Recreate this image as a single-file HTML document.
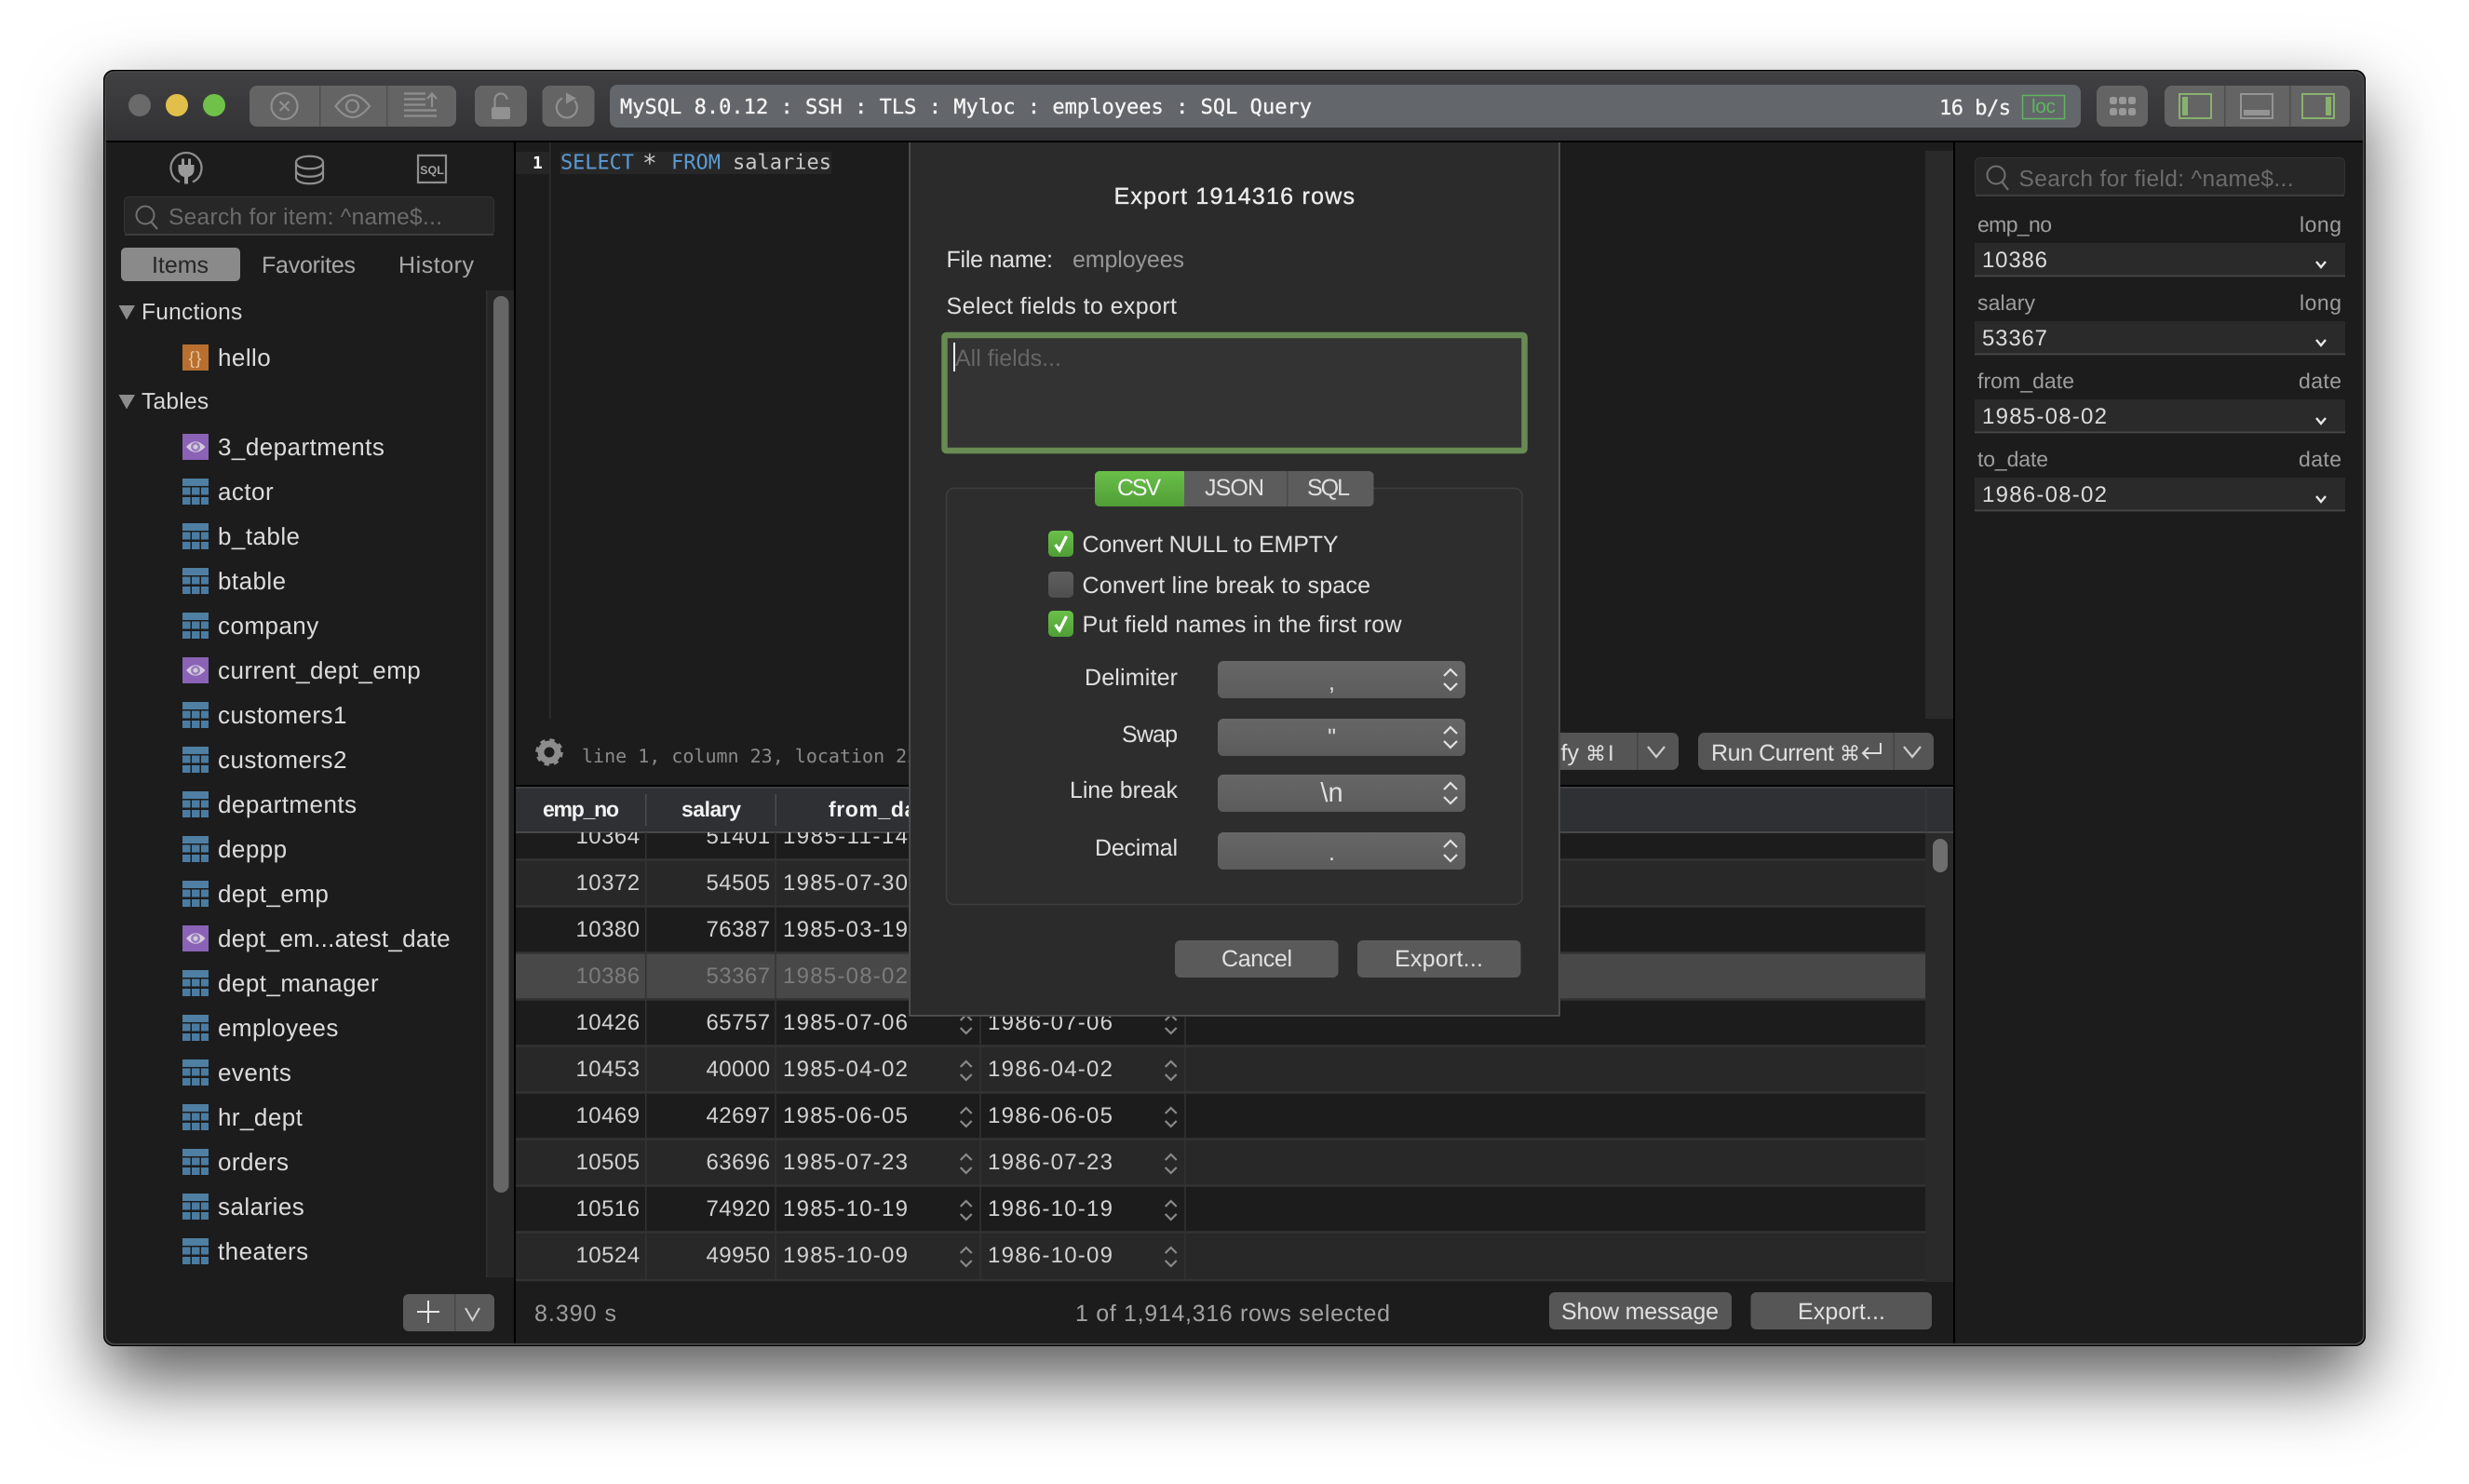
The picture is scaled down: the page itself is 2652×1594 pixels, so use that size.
<!DOCTYPE html>
<html><head><meta charset="utf-8"><title>Export</title>
<style>
html,body{margin:0;padding:0;background:#fff;width:2652px;height:1594px;overflow:hidden}
#sh{position:absolute;left:111px;top:75px;width:2430px;height:1371px;border-radius:11px;box-shadow:0 36px 80px rgba(0,0,0,.66)}
svg{position:absolute;left:0;top:0}
text{font-family:"Liberation Sans",sans-serif;text-rendering:geometricPrecision;white-space:pre}
.m{font-family:"DejaVu Sans Mono","Liberation Mono",monospace}
.t{font-size:26px;letter-spacing:.45px;fill:#dcdcdc}
.s{font-size:24.5px;letter-spacing:.25px;fill:#d8d8d8}
.c{font-size:24px;letter-spacing:.45px;fill:#d2d2d2;text-anchor:end}
.d{font-size:24px;fill:#d2d2d2}
.l{font-size:23px;fill:#9e9e9e}
.v{font-size:24px;fill:#dcdcdc}
.b{font-size:25px;fill:#e6e6e6}
.w{font-size:25px;fill:#e0e0e0}
.h{font-size:23px;fill:#f2f2f2;font-weight:bold}
.ic{fill:none;stroke:#8f8f8f;stroke-width:2.2}
</style></head><body>
<div id="sh"></div>
<svg width="2652" height="1594" viewBox="0 0 2652 1594" xmlns="http://www.w3.org/2000/svg">
<defs>
<linearGradient id="tb" x1="0" y1="0" x2="0" y2="1"><stop offset="0" stop-color="#414143"/><stop offset="1" stop-color="#323234"/></linearGradient>
<linearGradient id="gr" x1="0" y1="0" x2="0" y2="1"><stop offset="0" stop-color="#6ac048"/><stop offset="1" stop-color="#4f9e37"/></linearGradient>
<linearGradient id="gy" x1="0" y1="0" x2="0" y2="1"><stop offset="0" stop-color="#5f5f5f"/><stop offset="1" stop-color="#4e4e4e"/></linearGradient>
<linearGradient id="btn" x1="0" y1="0" x2="0" y2="1"><stop offset="0" stop-color="#666"/><stop offset="1" stop-color="#5c5c5c"/></linearGradient>
<clipPath id="win"><rect x="111" y="75" width="2430" height="1371" rx="11"/></clipPath>
<clipPath id="rows"><rect x="553" y="894" width="1515" height="484"/></clipPath>
<g id="ti"><rect x="196" y="0" width="28" height="8" fill="#4f7fa2"/><path d="M196 9.500h8.500v8h-8.500zM206 9.500h8.500v8h-8.500zM216 9.500h8v8h-8zM196 20h8.500v8h-8.500zM206 20h8.500v8h-8.500zM216 20h8v8h-8z" fill="#4a7ca2"/></g>
<g id="vi"><rect x="196" y="0" width="28" height="28" fill="#8a62b6"/><path d="M200 14Q210 2.500 220.500 14Q210 25.500 200 14Z" fill="#d4cadf"/><circle cx="210" cy="14" r="5" fill="#9a7cbd"/><circle cx="210" cy="14" r="2.500" fill="#d4cadf"/></g>
<g id="st"><path d="M-6 -4 0 -10 6 -4M-6 4 0 10 6 4" fill="none" stroke="#8a8a8a" stroke-width="2.2"/></g>
<g id="pst"><path d="M-7 -4 0 -11 7 -4M-7 4 0 11 7 4" fill="none" stroke="#e2e2e2" stroke-width="2.2"/></g>
<g id="dn"><path d="M-5 -3 0 3 5 -3" fill="none" stroke="#e8e8e8" stroke-width="2.4"/></g>
<g id="ck"><path d="M-6 1 -1.5 7 6 -8" fill="none" stroke="#fff" stroke-width="3.2"/></g>
</defs>

<g clip-path="url(#win)">
<rect x="111" y="75" width="2430" height="1371" fill="#1c1c1c"/>
<rect x="111" y="75" width="2430" height="76" fill="url(#tb)"/>
<rect x="111" y="151" width="2430" height="2" fill="#000"/>

<!-- traffic -->
<circle cx="150" cy="113" r="12" fill="#6a6a6a"/><circle cx="190" cy="113" r="12" fill="#e2bf4b"/><circle cx="230" cy="113" r="12" fill="#6fc149"/>

<!-- toolbar -->
<rect x="268" y="92" width="222" height="44" rx="8" fill="#646464"/>
<rect x="343" y="92" width="1.500" height="44" fill="#505050"/><rect x="415" y="92" width="1.500" height="44" fill="#505050"/>
<circle cx="305.500" cy="114" r="14" class="ic"/><path d="M300.500 109l10 10M310.500 109l-10 10" class="ic"/>
<path d="M360.500 114Q378.500 90 397 114Q378.500 138 360.500 114Z" class="ic"/><circle cx="378.500" cy="114" r="6.500" class="ic"/>
<path d="M434 100.500H457M434 106.500H457M434 112.500H457M434 118.500H469M434 124.500H469M464 115V101M459 106L464 100.500 469 106" class="ic"/>
<rect x="510" y="92" width="56" height="44" rx="8" fill="#646464"/>
<path d="M531.500 116V107a6.500 6.500 0 0 1 13 0" class="ic"/><rect x="528" y="115" width="20" height="13" rx="2" fill="#919191"/>
<rect x="582.500" y="92" width="56" height="44" rx="8" fill="#646464"/>
<path d="M604 105.500A11 11 0 1 0 617 108" class="ic"/><path d="M608 99.500 619 105.500 608 111.500Z" fill="#8f8f8f"/>

<rect x="655" y="91" width="1580" height="46" rx="8" fill="#63666b"/>
<text x="666" y="122" class="m" font-size="22" fill="#f4f4f4" stroke="#f4f4f4" stroke-width=".35" textLength="743">MySQL 8.0.12 : SSH : TLS : Myloc : employees : SQL Query</text>
<text x="2083" y="123" class="m" font-size="22" fill="#f4f4f4" stroke="#f4f4f4" stroke-width=".35" textLength="77">16 b/s</text>
<rect x="2172.500" y="102.500" width="45" height="25" fill="none" stroke="#5fb65f" stroke-width="1.500"/>
<text x="2182" y="121" font-size="21" fill="#5fb65f" textLength="26">loc</text>
<rect x="2252" y="92" width="55" height="44" rx="8" fill="#646464"/>
<g fill="#999"><rect x="2266" y="104" width="8" height="8" rx="2.500"/><rect x="2276" y="104" width="8" height="8" rx="2.500"/><rect x="2286" y="104" width="8" height="8" rx="2.500"/><rect x="2266" y="116" width="8" height="8" rx="2.500"/><rect x="2276" y="116" width="8" height="8" rx="2.500"/><rect x="2286" y="116" width="8" height="8" rx="2.500"/></g>
<rect x="2325" y="92" width="199" height="44" rx="8" fill="#646464"/>
<rect x="2389" y="92" width="1.500" height="44" fill="#4e4e4e"/><rect x="2459" y="92" width="1.500" height="44" fill="#4e4e4e"/>
<rect x="2341" y="101" width="34" height="26" fill="none" stroke="#88b16f" stroke-width="2"/><rect x="2344" y="104" width="6" height="20" fill="#88b16f"/>
<rect x="2407" y="101" width="34" height="26" fill="none" stroke="#949494" stroke-width="2"/><rect x="2410" y="118" width="28" height="6" fill="#949494"/>
<rect x="2473" y="101" width="34" height="26" fill="none" stroke="#88b16f" stroke-width="2"/><rect x="2498" y="104" width="6" height="20" fill="#88b16f"/>

<!-- sidebar top icons -->
<path d="M193 195.500A16.500 16.500 0 1 1 207 195.500" class="ic" stroke="#999"/>
<path d="M195 170.500v7h3v-7zM202 170.500v7h3v-7z" fill="#9a9a9a"/><path d="M191.500 177h17v5c0 5-3.500 7.500-6.500 8v7.500h-4V190c-3-.5-6.500-3-6.500-8z" fill="#9a9a9a"/>
<path d="M318 174.500c0-9 29-9 29 0s-29 9-29 0v16c0 9 29 9 29 0v-16M318 183c0 9 29 9 29 0" class="ic"/>
<rect x="449" y="167" width="30" height="29" class="ic"/>
<text x="464" y="187" font-size="12.500" font-weight="bold" fill="#a0a0a0" text-anchor="middle">SQL</text>

<!-- left search -->
<rect x="133.500" y="211.500" width="397" height="41" rx="5" fill="#272727" stroke="#333"/>
<rect x="134" y="251" width="396" height="2" fill="#3d3d3d"/>
<circle cx="156" cy="231" r="9.500" fill="none" stroke="#707070" stroke-width="2"/><path d="M162.500 238.500 169 246" stroke="#707070" stroke-width="2.200"/>
<text x="181" y="241" font-size="24.500" fill="#6c6c6c" textLength="294">Search for item: ^name$...</text>

<!-- tabs -->
<rect x="130" y="266" width="128" height="36" rx="5" fill="#8a8a8a"/>
<text x="163" y="293" class="b" style="fill:#262626" textLength="61">Items</text>
<text x="281" y="293" class="b" style="fill:#a8a8a8" textLength="101">Favorites</text>
<text x="428" y="293" class="b" style="fill:#a8a8a8" textLength="81">History</text>

<!-- tree -->
<rect x="522" y="312" width="30" height="1060" fill="#262626"/><rect x="522" y="312" width="1.500" height="1060" fill="#303030"/>
<rect x="530" y="318" width="16.500" height="963" rx="8" fill="#666"/>
<path d="M127.500 328H145L136 343.500Z" fill="#8c8c8c"/><path d="M127.500 424H145L136 439.500Z" fill="#8c8c8c"/>
<text x="152" y="343" class="s">Functions</text>
<text x="152" y="439" class="s">Tables</text>
<rect x="196" y="370" width="28" height="28" fill="#b86f2f"/><text x="210" y="391" font-size="19" fill="#e9c49d" text-anchor="middle" letter-spacing="1">{}</text>
<text x="234" y="393" class="t">hello</text>

<use href="#vi" y="466"/><text x="234" y="489" class="t">3_departments</text>
<use href="#ti" y="514"/><text x="234" y="537" class="t">actor</text>
<use href="#ti" y="562"/><text x="234" y="585" class="t">b_table</text>
<use href="#ti" y="610"/><text x="234" y="633" class="t">btable</text>
<use href="#ti" y="658"/><text x="234" y="681" class="t">company</text>
<use href="#vi" y="706"/><text x="234" y="729" class="t">current_dept_emp</text>
<use href="#ti" y="754"/><text x="234" y="777" class="t">customers1</text>
<use href="#ti" y="802"/><text x="234" y="825" class="t">customers2</text>
<use href="#ti" y="850"/><text x="234" y="873" class="t">departments</text>
<use href="#ti" y="898"/><text x="234" y="921" class="t">deppp</text>
<use href="#ti" y="946"/><text x="234" y="969" class="t">dept_emp</text>
<use href="#vi" y="994"/><text x="234" y="1017" class="t" textLength="250">dept_em...atest_date</text>
<use href="#ti" y="1042"/><text x="234" y="1065" class="t">dept_manager</text>
<use href="#ti" y="1090"/><text x="234" y="1113" class="t">employees</text>
<use href="#ti" y="1138"/><text x="234" y="1161" class="t">events</text>
<use href="#ti" y="1186"/><text x="234" y="1209" class="t">hr_dept</text>
<use href="#ti" y="1234"/><text x="234" y="1257" class="t">orders</text>
<use href="#ti" y="1282"/><text x="234" y="1305" class="t">salaries</text>
<use href="#ti" y="1330"/><text x="234" y="1353" class="t">theaters</text>

<rect x="433" y="1390" width="98" height="40" rx="6" fill="#5a5a5a"/><rect x="488" y="1390" width="1.500" height="40" fill="#484848"/>
<path d="M460 1397v24M448 1409h24" stroke="#e6e6e6" stroke-width="2"/>
<path d="M500 1405l7.500 13 7.500-13" fill="none" stroke="#d0d0d0" stroke-width="2"/>

<rect x="552" y="153" width="2" height="1293" fill="#000"/>
<rect x="2098" y="153" width="2" height="1293" fill="#000"/>

<!-- editor -->
<rect x="554" y="163" width="37" height="24" fill="#262626"/>
<rect x="590" y="153" width="1.500" height="619" fill="#2e2e2e"/>
<rect x="2068" y="162" width="30" height="610" fill="#2a2a2a"/>
<rect x="602" y="163" width="291" height="24" fill="#272727"/>
<text x="572" y="181" class="m" font-size="18" fill="#fff" font-weight="bold">1</text>
<text x="602" y="181.500" class="m" font-size="22" fill="#5b9bd5" textLength="79">SELECT</text>
<text x="690" y="184" class="m" font-size="26" fill="#c8c8c8">*</text>
<text x="721" y="181.500" class="m" font-size="22" fill="#5b9bd5" textLength="53">FROM</text>
<text x="787" y="181.500" class="m" font-size="22" fill="#c8c8c8" textLength="106">salaries</text>

<!-- status -->
<circle cx="590" cy="808" r="9" fill="none" stroke="#8c8c8c" stroke-width="7"/>
<circle cx="590" cy="808" r="12.500" fill="none" stroke="#8c8c8c" stroke-width="4.500" stroke-dasharray="5 4.820"/>
<text x="625" y="819" class="m" font-size="20" fill="#8a8a8a">line 1, column 23, location 22</text>

<rect x="1500" y="787" width="303" height="40" rx="7" fill="#555"/><rect x="1758" y="787" width="1.500" height="40" fill="#444"/>
<text x="1696" y="817" class="w" text-anchor="end">Beautify</text>
<text x="1703" y="817" font-size="22" fill="#e0e0e0" style="font-family:'DejaVu Sans',sans-serif">⌘</text>
<text x="1727" y="817" font-size="24" fill="#e0e0e0">I</text>
<path d="M1770 802l9 11 9-11" fill="none" stroke="#ccc" stroke-width="2.200"/>
<rect x="1824" y="787" width="253" height="40" rx="7" fill="#555"/><rect x="2033.500" y="787" width="1.500" height="40" fill="#444"/>
<text x="1838" y="817" class="w" textLength="132">Run Current</text>
<text x="1976" y="817" font-size="22" fill="#e0e0e0" style="font-family:'DejaVu Sans',sans-serif">⌘</text>
<path d="M2020 798v11h-19M2007 803l-6 6 6 6" fill="none" stroke="#dcdcdc" stroke-width="2"/>
<path d="M2045 802l9 11 9-11" fill="none" stroke="#ccc" stroke-width="2.200"/>

<!-- table -->
<rect x="554" y="843" width="1544" height="2" fill="#000"/>
<rect x="554" y="845" width="1544" height="49" fill="#2e3034"/>
<rect x="554" y="845" width="1544" height="2" fill="#3f4144"/>
<rect x="554" y="893" width="1544" height="2" fill="#45474a"/>
<rect x="693" y="853" width="1.500" height="34" fill="#4a4c50"/><rect x="832.500" y="853" width="1.500" height="34" fill="#4a4c50"/>
<rect x="2068" y="845" width="1.500" height="49" fill="#35373a"/>
<text x="583" y="877" class="h" textLength="82">emp_no</text>
<text x="732" y="877" class="h" textLength="64">salary</text>
<text x="890" y="877" class="h" textLength="116">from_date</text>

<g clip-path="url(#rows)">
<rect x="554" y="924" width="1514" height="50" fill="#282828"/>
<rect x="554" y="1024" width="1514" height="50" fill="#484848"/>
<rect x="554" y="1124" width="1514" height="50" fill="#282828"/>
<rect x="554" y="1224" width="1514" height="50" fill="#282828"/>
<rect x="554" y="1324" width="1514" height="50" fill="#282828"/>
<path d="M554 923.500H2068M554 973.500H2068M554 1023.500H2068M554 1073.500H2068M554 1123.500H2068M554 1173.500H2068M554 1223.500H2068M554 1273.500H2068M554 1323.500H2068M554 1375H2068" stroke="#333" stroke-width="2.500"/>
<path d="M693.700 894V1374M833 894V1374M1053 894V1374M1273 894V1374" stroke="#333" stroke-width="1.500"/>

<text x="687.500" y="906" class="c">10364</text><text x="827.500" y="906" class="c">51401</text><text x="841" y="906" class="d" textLength="134">1985-11-14</text>
<text x="687.500" y="956" class="c">10372</text><text x="827.500" y="956" class="c">54505</text><text x="841" y="956" class="d" textLength="134">1985-07-30</text>
<text x="687.500" y="1006" class="c">10380</text><text x="827.500" y="1006" class="c">76387</text><text x="841" y="1006" class="d" textLength="134">1985-03-19</text>
<text x="687.500" y="1056" class="c" style="fill:#7c7c7c">10386</text><text x="827.500" y="1056" class="c" style="fill:#7c7c7c">53367</text><text x="841" y="1056" class="d" style="fill:#7c7c7c" textLength="134">1985-08-02</text>
<text x="687.500" y="1106" class="c">10426</text><text x="827.500" y="1106" class="c">65757</text><text x="841" y="1106" class="d" textLength="134">1985-07-06</text><text x="1061" y="1106" class="d" textLength="134">1986-07-06</text>
<text x="687.500" y="1156" class="c">10453</text><text x="827.500" y="1156" class="c">40000</text><text x="841" y="1156" class="d" textLength="134">1985-04-02</text><text x="1061" y="1156" class="d" textLength="134">1986-04-02</text>
<text x="687.500" y="1206" class="c">10469</text><text x="827.500" y="1206" class="c">42697</text><text x="841" y="1206" class="d" textLength="134">1985-06-05</text><text x="1061" y="1206" class="d" textLength="134">1986-06-05</text>
<text x="687.500" y="1256" class="c">10505</text><text x="827.500" y="1256" class="c">63696</text><text x="841" y="1256" class="d" textLength="134">1985-07-23</text><text x="1061" y="1256" class="d" textLength="134">1986-07-23</text>
<text x="687.500" y="1306" class="c">10516</text><text x="827.500" y="1306" class="c">74920</text><text x="841" y="1306" class="d" textLength="134">1985-10-19</text><text x="1061" y="1306" class="d" textLength="134">1986-10-19</text>
<text x="687.500" y="1356" class="c">10524</text><text x="827.500" y="1356" class="c">49950</text><text x="841" y="1356" class="d" textLength="134">1985-10-09</text><text x="1061" y="1356" class="d" textLength="134">1986-10-09</text>

<use href="#st" x="1037.700" y="1100"/><use href="#st" x="1257.700" y="1100"/>
<use href="#st" x="1037.700" y="1150"/><use href="#st" x="1257.700" y="1150"/>
<use href="#st" x="1037.700" y="1200"/><use href="#st" x="1257.700" y="1200"/>
<use href="#st" x="1037.700" y="1250"/><use href="#st" x="1257.700" y="1250"/>
<use href="#st" x="1037.700" y="1300"/><use href="#st" x="1257.700" y="1300"/>
<use href="#st" x="1037.700" y="1350"/><use href="#st" x="1257.700" y="1350"/>
</g>
<rect x="2068" y="895" width="30" height="482" fill="#2a2a2a"/>
<rect x="2076" y="901" width="16" height="36" rx="8" fill="#6e6e6e"/>

<!-- footer -->
<text x="574" y="1419" class="w" style="fill:#9c9c9c" textLength="88">8.390 s</text>
<text x="1155" y="1419" class="w" style="fill:#a2a2a2" textLength="338">1 of 1,914,316 rows selected</text>
<rect x="1664" y="1388" width="196" height="40" rx="6" fill="#565656"/>
<text x="1677" y="1417" class="w" textLength="169">Show message</text>
<rect x="1880.500" y="1388" width="194.500" height="40" rx="6" fill="#565656"/>
<text x="1931" y="1417" class="w" textLength="94">Export...</text>

<!-- right panel -->
<rect x="2121.500" y="169.500" width="397" height="41" rx="5" fill="#272727" stroke="#333"/>
<rect x="2122" y="209" width="396" height="2" fill="#3d3d3d"/>
<circle cx="2144" cy="188" r="9.500" fill="none" stroke="#707070" stroke-width="2"/><path d="M2150.500 195.500 2157 204" stroke="#707070" stroke-width="2.200"/>
<text x="2168.500" y="200" font-size="24.500" fill="#6c6c6c" textLength="295">Search for field: ^name$...</text>

<text x="2124" y="249" class="l" textLength="80">emp_no</text><text x="2470" y="249" class="l" textLength="45">long</text>
<rect x="2121" y="261" width="398" height="36" fill="#2a2a2a"/><rect x="2121" y="295.500" width="398" height="1.800" fill="#484848"/>
<text x="2129" y="287" class="v" textLength="70">10386</text><use href="#dn" x="2493" y="284"/>

<text x="2124" y="333" class="l" textLength="62">salary</text><text x="2470" y="333" class="l" textLength="45">long</text>
<rect x="2121" y="345" width="398" height="36" fill="#2a2a2a"/><rect x="2121" y="379.500" width="398" height="1.800" fill="#484848"/>
<text x="2129" y="371" class="v" textLength="70">53367</text><use href="#dn" x="2493" y="368"/>

<text x="2124" y="417" class="l" textLength="104">from_date</text><text x="2469" y="417" class="l" textLength="46">date</text>
<rect x="2121" y="429" width="398" height="36" fill="#2a2a2a"/><rect x="2121" y="463.500" width="398" height="1.800" fill="#484848"/>
<text x="2129" y="455" class="v" textLength="134">1985-08-02</text><use href="#dn" x="2493" y="452"/>

<text x="2124" y="501" class="l" textLength="76">to_date</text><text x="2469" y="501" class="l" textLength="46">date</text>
<rect x="2121" y="513" width="398" height="36" fill="#2a2a2a"/><rect x="2121" y="547.500" width="398" height="1.800" fill="#484848"/>
<text x="2129" y="539" class="v" textLength="134">1986-08-02</text><use href="#dn" x="2493" y="536"/>

<!-- modal -->
<rect x="976" y="153" width="700" height="939" fill="#000"/>
<rect x="977" y="152" width="698" height="939" fill="#2b2b2b" stroke="#5e5e5e" stroke-width="1.500"/>
<rect x="975" y="151" width="702" height="2" fill="#000"/>
<text x="1196.500" y="219" class="b" style="fill:#ececec" stroke="#ececec" stroke-width=".35" textLength="258.500">Export 1914316 rows</text>
<text x="1016.500" y="287" class="w" textLength="114.500">File name:</text>
<text x="1152" y="287" class="w" style="fill:#979797" textLength="120">employees</text>
<text x="1016.500" y="337" class="w" textLength="247.500">Select fields to export</text>

<rect x="1014.500" y="360" width="623" height="124" rx="2" fill="#333" stroke="#678b52" stroke-width="6.500"/>
<rect x="1024" y="368" width="2" height="31" fill="#f0f0f0"/>
<text x="1026" y="393" class="w" style="fill:#666" textLength="114">All fields...</text>

<rect x="1016.500" y="524.500" width="618.500" height="447" rx="8" fill="#2d2d2d" stroke="#3e3e3e" stroke-width="1.500"/>
<rect x="1176" y="506" width="299.500" height="38" rx="5" fill="#5c5c5c"/>
<path d="M1181 506H1272V544H1181a5 5 0 0 1-5-5V511a5 5 0 0 1 5-5Z" fill="url(#gr)"/>
<rect x="1382" y="506" width="1.500" height="38" fill="#4a4a4a"/>
<text x="1200" y="532" class="w" style="fill:#f4f4f4" textLength="47">CSV</text>
<text x="1294" y="532" class="w" textLength="64">JSON</text>
<text x="1404" y="532" class="w" textLength="46">SQL</text>

<rect x="1126" y="570" width="27" height="28" rx="5" fill="url(#gr)"/><use href="#ck" x="1139.500" y="584"/>
<rect x="1126" y="614" width="27" height="28" rx="5" fill="url(#gy)"/>
<rect x="1126" y="656" width="27" height="28" rx="5" fill="url(#gr)"/><use href="#ck" x="1139.500" y="670"/>
<text x="1162.500" y="593" class="w" textLength="275">Convert NULL to EMPTY</text>
<text x="1162.500" y="637" class="w" textLength="309.500">Convert line break to space</text>
<text x="1162.500" y="679" class="w" textLength="343">Put field names in the first row</text>

<text x="1165" y="736" class="w" textLength="100">Delimiter</text>
<text x="1205" y="797" class="w" textLength="60">Swap</text>
<text x="1149" y="857" class="w" textLength="116">Line break</text>
<text x="1176" y="919" class="w" textLength="89">Decimal</text>

<rect x="1308" y="710" width="266" height="40" rx="6" fill="url(#btn)"/>
<rect x="1308" y="772" width="266" height="40" rx="6" fill="url(#btn)"/>
<rect x="1308" y="832" width="266" height="40" rx="6" fill="url(#btn)"/>
<rect x="1308" y="894" width="266" height="40" rx="6" fill="url(#btn)"/>
<use href="#pst" x="1558" y="730"/><use href="#pst" x="1558" y="792"/><use href="#pst" x="1558" y="852"/><use href="#pst" x="1558" y="914"/>
<text x="1430.500" y="741" class="w" text-anchor="middle">,</text>
<text x="1430.500" y="800" class="w" text-anchor="middle">"</text>
<text x="1430.500" y="861" class="w" text-anchor="middle" style="font-size:29px">\n</text>
<text x="1430.500" y="924" class="w" text-anchor="middle">.</text>

<rect x="1262" y="1010" width="175.500" height="40" rx="6" fill="#5a5a5a"/>
<text x="1312" y="1038" class="w" textLength="76">Cancel</text>
<rect x="1458" y="1010" width="175.500" height="40" rx="6" fill="#5a5a5a"/>
<text x="1498" y="1038" class="w" textLength="95">Export...</text>

<!-- window edges -->
<rect x="113" y="77" width="2426" height="1367" rx="10" fill="none" stroke="#484848" stroke-width="2"/>
<rect x="111.500" y="75.500" width="2429" height="1370" rx="11" fill="none" stroke="#000" stroke-width="1.500"/>
</g>
</svg>
</body></html>
